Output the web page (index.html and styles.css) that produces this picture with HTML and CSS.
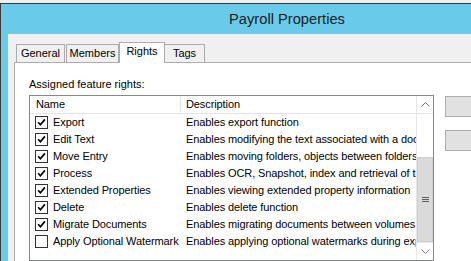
FILE: index.html
```html
<!DOCTYPE html>
<html>
<head>
<meta charset="utf-8">
<link rel="stylesheet" href="styles.css">
</head>
<body>
<div class="window">
  <div class="titlebar">Payroll Properties</div>
  <div class="client">
    <div class="tabs">
      <div class="tab tab-general">General</div>
      <div class="tab tab-members">Members</div>
      <div class="tab tab-rights active">Rights</div>
      <div class="tab tab-tags">Tags</div>
    </div>
    <div class="panel">
      <div class="label">Assigned feature rights:</div>
      <div class="row-area">
        <div class="list">
          <div class="list-body">
            <div class="header">
              <div class="col-name hname">Name</div>
              <div class="col-desc hdesc">Description</div>
            </div>
            <div class="item"><div class="col-name"><span class="cb checked"><svg viewBox="0 0 13 13"><path d="M2.5 6.2 L5.2 9.2 L10.5 2.8"/></svg></span>Export</div><div class="col-desc">Enables export function</div></div>
            <div class="item"><div class="col-name"><span class="cb checked"><svg viewBox="0 0 13 13"><path d="M2.5 6.2 L5.2 9.2 L10.5 2.8"/></svg></span>Edit Text</div><div class="col-desc">Enables modifying the text associated with a document</div></div>
            <div class="item"><div class="col-name"><span class="cb checked"><svg viewBox="0 0 13 13"><path d="M2.5 6.2 L5.2 9.2 L10.5 2.8"/></svg></span>Move Entry</div><div class="col-desc">Enables moving folders, objects between folders</div></div>
            <div class="item"><div class="col-name"><span class="cb checked"><svg viewBox="0 0 13 13"><path d="M2.5 6.2 L5.2 9.2 L10.5 2.8"/></svg></span>Process</div><div class="col-desc">Enables OCR, Snapshot, index and retrieval of text</div></div>
            <div class="item"><div class="col-name"><span class="cb checked"><svg viewBox="0 0 13 13"><path d="M2.5 6.2 L5.2 9.2 L10.5 2.8"/></svg></span>Extended Properties</div><div class="col-desc">Enables viewing extended property information</div></div>
            <div class="item"><div class="col-name"><span class="cb checked"><svg viewBox="0 0 13 13"><path d="M2.5 6.2 L5.2 9.2 L10.5 2.8"/></svg></span>Delete</div><div class="col-desc">Enables delete function</div></div>
            <div class="item"><div class="col-name"><span class="cb checked"><svg viewBox="0 0 13 13"><path d="M2.5 6.2 L5.2 9.2 L10.5 2.8"/></svg></span>Migrate Documents</div><div class="col-desc">Enables migrating documents between volumes</div></div>
            <div class="item"><div class="col-name"><span class="cb"></span>Apply Optional Watermark</div><div class="col-desc">Enables applying optional watermarks during export</div></div>
          </div>
          <div class="scrollbar">
            <div class="sb-btn sb-up"><svg viewBox="0 0 9 5"><path d="M0.5 4.5 L4.5 0.5 L8.5 4.5"/></svg></div>
            <div class="sb-track-top"></div>
            <div class="sb-thumb"><svg viewBox="0 0 7 6"><path d="M0 0.5 H7 M0 2.5 H7 M0 4.5 H7"/></svg></div>
            <div class="sb-btn sb-down"><svg viewBox="0 0 9 5"><path d="M0.5 0.5 L4.5 4.5 L8.5 0.5"/></svg></div>
          </div>
        </div>
        <div class="buttons">
          <div class="btn"></div>
          <div class="btn"></div>
        </div>
      </div>
    </div>
  </div>
</div>
</body>
</html>
```

FILE: styles.css
```css
html, body {
  margin: 0;
  height: 100%;
  overflow: hidden;
  background: #f0f0f0;
}
body {
  font-family: "Liberation Sans", Arial, sans-serif;
  font-size: 11px;
  color: #000;
}
.window {
  margin-top: 3px;
  width: 573px;
  height: 258px;
  box-sizing: border-box;
  border-top: 1px solid #3a3a3a;
  border-left: 1px solid #3a3a3a;
  background: #69cbe9;
  display: flex;
  flex-direction: column;
}
.titlebar {
  height: 30px;
  line-height: 30px;
  text-align: center;
  font-size: 14.7px;
  color: #1c1c1c;
  flex: none;
}
.client {
  flex: 1;
  margin-left: 7px;
  background: #f0f0f0;
  padding: 8px 0 0 6px;
  display: flex;
  flex-direction: column;
  min-height: 0;
}
.tabs {
  display: flex;
  height: 20px;
  padding-left: 2px;
  position: relative;
  z-index: 1;
  flex: none;
}
.tab {
  box-sizing: border-box;
  height: 18px;
  margin-top: 2px;
  border: 1px solid #acacac;
  border-bottom: none;
  background: #f0f0f0;
  text-align: center;
  line-height: 17px;
}
.tab-general { width: 49px; }
.tab-members { width: 53px; margin-left: 1px; }
.tab-rights { width: 46px; }
.tab-tags { width: 41px; margin-left: -1px; }
.tab.active {
  height: 21px;
  margin-top: 0;
  background: #fff;
  line-height: 17px;
  position: relative;
  z-index: 2;
}
.panel {
  flex: 1;
  background: #fff;
  border-top: 1px solid #acacac;
  border-left: 1px solid #acacac;
  padding-left: 14px;
  min-height: 0;
}
.label {
  margin-top: 13px;
  height: 16px;
  line-height: 16px;
}
.row-area {
  display: flex;
  align-items: flex-start;
  gap: 11px;
  margin-top: 3px;
}
.list {
  width: 405px;
  height: 166px;
  box-sizing: border-box;
  border: 1px solid #828790;
  display: flex;
  background: #fff;
  flex: none;
  letter-spacing: -0.1px;
}
.list-body {
  flex: 1;
  min-width: 0;
  overflow: hidden;
}
.header {
  display: flex;
  height: 17px;
  border-bottom: 1px solid #e5e5e5;
  line-height: 17px;
}
.item {
  display: flex;
  height: 17px;
  line-height: 17px;
}
.col-name {
  width: 150px;
  flex: none;
  display: flex;
  align-items: center;
  padding-left: 5px;
  box-sizing: border-box;
  white-space: nowrap;
  overflow: hidden;
}
.hname { padding-left: 6px; }
.col-desc {
  flex: 1;
  min-width: 0;
  padding-left: 5px;
  white-space: nowrap;
  overflow: hidden;
}
.hdesc {
  border-left: 1px solid #e5e5e5;
  padding-left: 5px;
}
.item .col-desc { padding-left: 6px; }
.cb {
  width: 13px;
  height: 13px;
  box-sizing: border-box;
  border: 1px solid #333;
  background: #fff;
  margin-right: 5px;
  flex: none;
  display: flex;
}
.cb svg {
  width: 11px;
  height: 11px;
}
.cb svg path {
  fill: none;
  stroke: #000;
  stroke-width: 2;
}
.scrollbar {
  width: 17px;
  flex: none;
  display: flex;
  flex-direction: column;
  border-left: 1px solid #e6e6e6;
  box-sizing: border-box;
  background: #fff;
}
.sb-btn {
  height: 17px;
  display: flex;
  align-items: center;
  justify-content: center;
  flex: none;
}
.sb-up { border-bottom: 1px solid #e6e6e6; }
.sb-down { border-top: 1px solid #e6e6e6; }
.sb-btn svg {
  width: 9px;
  height: 5px;
}
.sb-btn svg path {
  fill: none;
  stroke: #7a7a7a;
  stroke-width: 1;
}
.sb-track-top {
  height: 43px;
  flex: none;
}
.sb-thumb {
  flex: 1;
  background: #dadada;
  border: 1px solid #cfcfcf;
  display: flex;
  align-items: center;
  justify-content: center;
}
.sb-thumb svg {
  width: 7px;
  height: 6px;
}
.sb-thumb svg path {
  stroke: #606060;
  stroke-width: 1;
}
.buttons {
  display: flex;
  flex-direction: column;
  gap: 13px;
  margin-top: 1px;
}
.btn {
  width: 40px;
  height: 21px;
  box-sizing: border-box;
  border: 1px solid #adadad;
  background: #e1e1e1;
}
```
